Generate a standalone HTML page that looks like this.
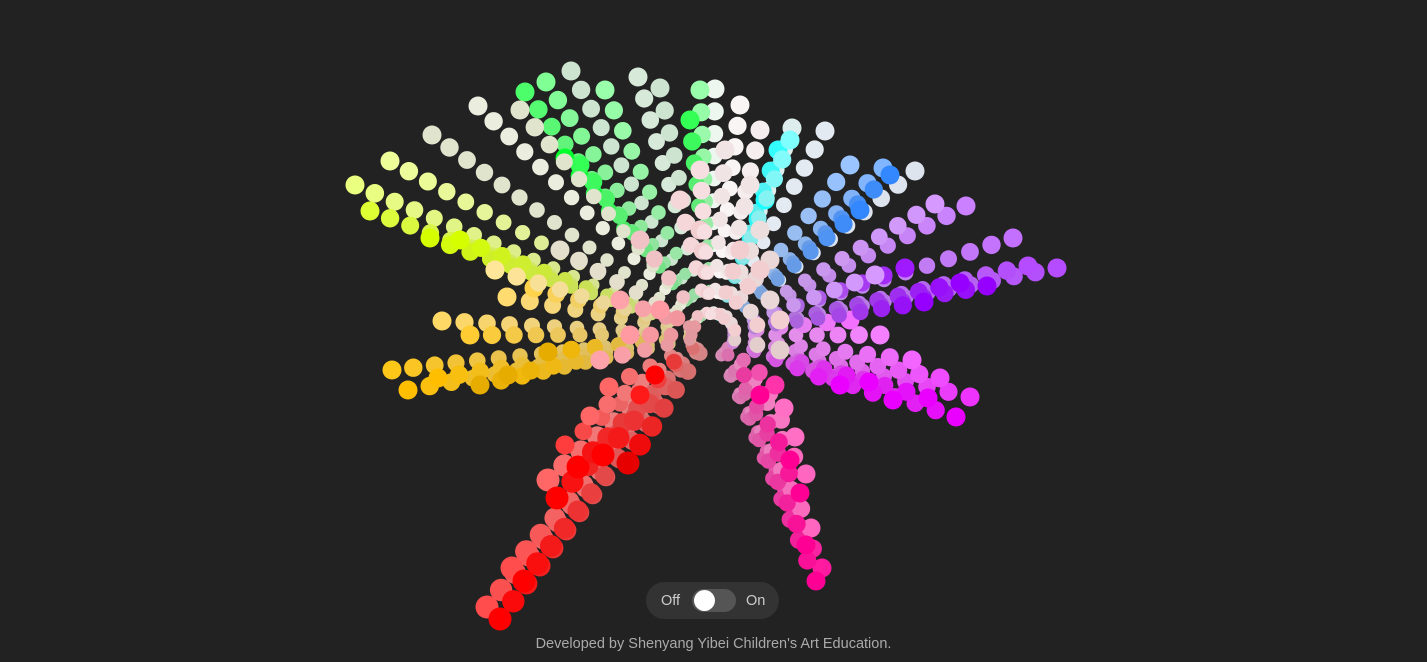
<!DOCTYPE html>
<html><head><meta charset="utf-8"><style>
html,body{margin:0;padding:0;background:#222;width:1427px;height:662px;overflow:hidden;font-family:"Liberation Sans",sans-serif}
svg{position:absolute;left:0;top:0}
.pill{position:absolute;left:646px;top:582px;width:133px;height:37px;border-radius:19px;background:#333;}
.pill span{position:absolute;top:11px;font-size:14.5px;color:#ccc}
.sw{position:absolute;left:46px;top:7px;width:44px;height:23px;border-radius:12px;background:#555}
.knob{position:absolute;left:2px;top:1px;width:21px;height:21px;border-radius:50%;background:#fff}
.foot{position:absolute;left:0;width:1427px;top:636px;text-align:center;font-size:14.5px;color:#aaa}
</style></head><body>
<svg id="s" width="1427" height="662"></svg>
<div class="pill"><span style="left:15px">Off</span><div class="sw"><div class="knob"></div></div><span style="left:100px">On</span></div>
<div class="foot">Developed by Shenyang Yibei Children's Art Education.</div>
<script>
var O=[712,335];
var arms=[
[0,[[487,607,65],[500,619,50],[512,568,65],[524,581,50],[548,480,70],[557,498,50],[565,445,62],[578,467,50],[590,416,70],[603,455,50],[609,387,70],[628,463,45],[640,395,55],[655,375,50]]],
[325,[[822,568,55],[816,581,50],[811,528,70],[806,545,50],[806,474,70],[800,493,50],[795,437,72],[790,460,50],[784,408,72],[775,385,60],[760,395,50]]],
[295,[[970,397,60],[956,417,50],[940,378,65],[928,398,50],[912,360,70],[893,400,50],[869,382,50],[840,385,50],[880,335,75],[850,320,72]]],
[275,[[1057,268,65],[1028,266,65],[1013,238,72],[987,286,50],[966,206,75],[960,283,50],[935,204,80],[924,302,50],[905,268,55],[875,275,80]]],
[215,[[915,171,90],[883,168,75],[890,175,60],[850,165,80],[825,131,92],[860,210,60]]],
[180,[[792,128,90],[778,150,60],[765,200,55],[790,140,75]]],
[130,[[715,89,95],[700,90,80],[638,77,88],[660,88,85],[571,71,85],[546,82,75],[525,92,65],[565,158,50],[580,165,60],[605,90,80],[690,120,60]]],
[70,[[478,106,90],[432,135,85],[390,161,80],[355,185,75],[370,211,60],[430,238,50],[460,240,50],[495,270,50],[520,110,85]]],
[45,[[392,370,55],[408,390,50],[442,321,70],[438,378,50],[470,335,60],[480,385,45],[507,297,72],[508,375,45],[534,288,65],[548,352,45],[560,250,85],[495,270,80]]],
[0,[[740,105,97],[760,130,95],[725,150,92],[750,185,92],[770,260,88],[780,350,85],[770,300,88],[760,230,90]]],
[355,[[680,200,90],[700,230,88],[740,250,88],[760,270,88],[640,240,85],[620,300,82],[780,320,88],[660,310,80],[600,360,82],[630,335,80],[700,170,92]]]
];
var s=document.getElementById('s'),h='';
arms.forEach(function(a){var hue=a[0];a[1].forEach(function(e){
 var dx=e[0]-O[0],dy=e[1]-O[1],d=Math.sqrt(dx*dx+dy*dy),n=Math.max(2,Math.round(d/22));
 for(var i=n;i>=1;i--){var t=i/n;if(d*t<18)continue;var x=O[0]+dx*t,y=O[1]+dy*t;
  var r=5+4.5*t+(hue==0&&e[1]>450?2:0);
  var sat=e[2]>84?(hue==355?60:30):(40+60*t);
  var l=e[2]*t+(1-t)*72; if(e[2]>84)l=e[2];
  h+='<circle cx="'+x.toFixed(1)+'" cy="'+y.toFixed(1)+'" r="'+r.toFixed(1)+'" fill="hsl('+hue+','+sat.toFixed(0)+'%,'+l.toFixed(0)+'%)"/>';}
});});
s.innerHTML=h;
</script>
</body></html>
